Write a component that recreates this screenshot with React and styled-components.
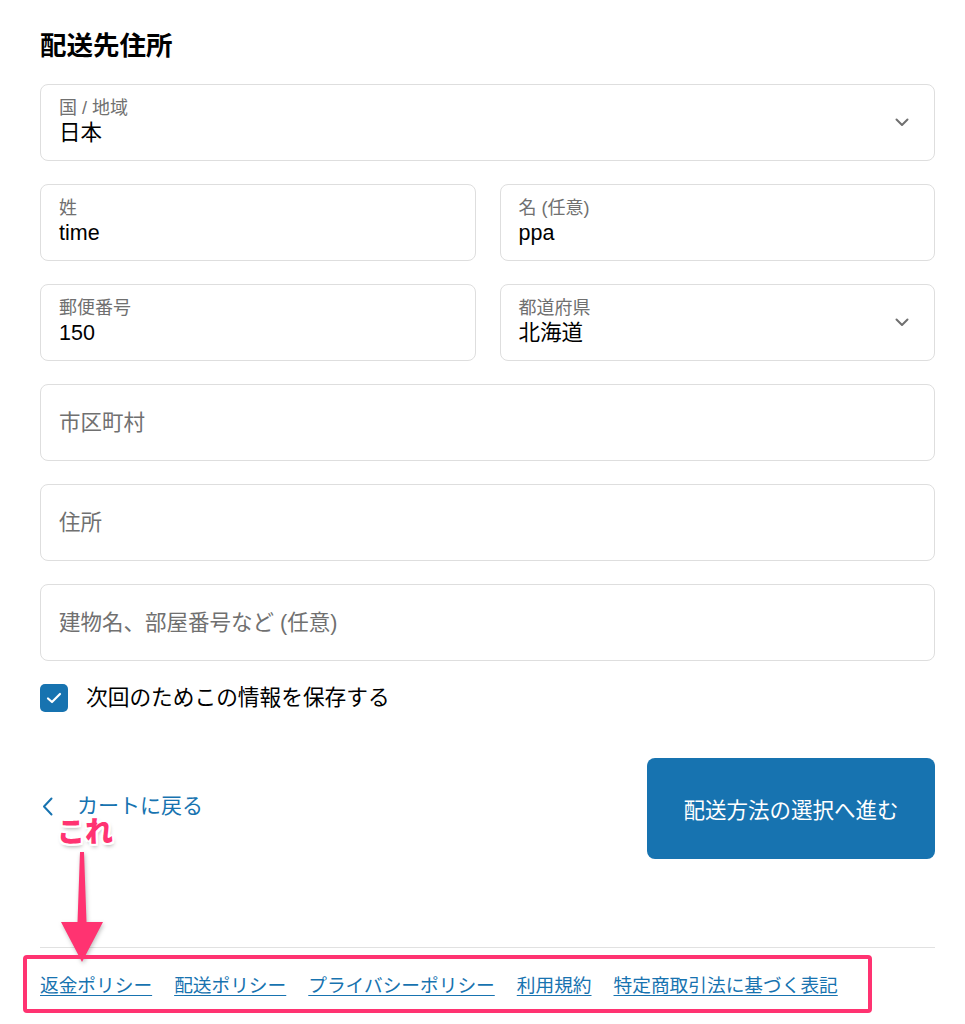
import React from 'react'
import styled, { createGlobalStyle } from 'styled-components'

const GlobalStyle = createGlobalStyle`
body {
    margin: 0;
    background: #fff;
    font-family: "Liberation Sans", "Noto Sans CJK JP", sans-serif;
    color: #000;
}
`

const Page = styled.div`
position: relative;
width: 935px;
min-height: 1024px;
padding: 30px 0 0 40px;
box-sizing: border-box;
overflow: hidden;
`

const Heading = styled.h2`
margin: 0;
font-size: 26.5px;
line-height: 32px;
font-weight: 700;
`

// FORM
const Form = styled.div`
margin-top: 22px;
display: grid;
grid-template-columns: 1fr 1fr;
column-gap: 24px;
row-gap: 23px;
`

const Field = styled.div`
position: relative;
grid-column: ${({ full }) => (full ? '1 / -1' : 'auto')};
height: 77px;
box-sizing: border-box;
border: 1px solid #dedede;
border-radius: 8px;
padding: 0 18px 3px 18px;
display: flex;
flex-direction: column;
justify-content: center;
`

const Label = styled.span`
font-size: 18px;
line-height: 24px;
color: #707070;
`

const Value = styled.span`
font-size: 21.5px;
line-height: 26px;
color: #000;
`

const Placeholder = styled.span`
font-size: 21.5px;
line-height: 26px;
color: #707070;
padding-top: 3px;
`

const Chevron = styled.svg`
position: absolute;
right: 25px;
top: 50%;
margin-top: -5px;
`

// CHECKBOX
const CheckRow = styled.label`
margin-top: 23px;
display: flex;
align-items: center;
gap: 18px;
font-size: 21.7px;
line-height: 28px;
`

const Box = styled.span`
width: 28px;
height: 28px;
border-radius: 5px;
background: #1773b0;
display: flex;
align-items: center;
justify-content: center;
`

// ACTIONS
const Actions = styled.div`
margin-top: 46px;
display: flex;
justify-content: space-between;
align-items: center;
`

const BackLink = styled.a`
display: flex;
align-items: center;
gap: 24px;
padding: 0 0 5px 2px;
font-size: 21px;
line-height: 28px;
color: #1773b0;
text-decoration: none;
`

const Button = styled.button`
width: 288px;
height: 101px;
border: none;
border-radius: 8px;
background: #1773b0;
color: #fff;
font-family: inherit;
font-size: 21.5px;
`

// FOOTER
const Footer = styled.div`
margin-top: 88px;
border-top: 1px solid #e1e1e1;
padding-top: 26px;
display: flex;
gap: 22px;
`

const FootLink = styled.a`
font-size: 18.7px;
line-height: 24px;
color: #1773b0;
text-decoration: underline;
text-underline-offset: 3px;
`

// ANNOTATION
const Frame = styled.div`
position: absolute;
left: 23px;
top: 955px;
width: 849px;
height: 58px;
box-sizing: border-box;
border: 4px solid #ff3371;
border-radius: 4px;
`

const Note = styled.span`
position: absolute;
left: 57px;
top: 812px;
font-size: 28px;
line-height: 36px;
font-weight: 900;
font-family: "Noto Sans CJK JP", sans-serif;
color: #ff3371;
text-shadow: 2px 0 0 #fff, -2px 0 0 #fff, 0 2px 0 #fff, 0 -2px 0 #fff,
    2px 2px 0 #fff, -2px -2px 0 #fff, 2px -2px 0 #fff, -2px 2px 0 #fff,
    1px 3px 4px rgba(0, 0, 0, 0.35);
`

const Arrow = styled.svg`
position: absolute;
left: 58px;
top: 850px;
filter: drop-shadow(1px 2px 2px rgba(0, 0, 0, 0.25));
`

const ChevronDown = () => (
    <Chevron width="14" height="9" viewBox="0 0 14 9">
        <path d="M1.5 1.5 L7 7 L12.5 1.5" fill="none" stroke="#707070" strokeWidth="2" strokeLinecap="round" strokeLinejoin="round" />
    </Chevron>
)

const links = ['返金ポリシー', '配送ポリシー', 'プライバシーポリシー', '利用規約', '特定商取引法に基づく表記']

const App = () => {
    return (
        <Page>
            <GlobalStyle />
            <Heading>配送先住所</Heading>
            <Form>
                <Field full>
                    <Label>国 / 地域</Label>
                    <Value>日本</Value>
                    <ChevronDown />
                </Field>
                <Field>
                    <Label>姓</Label>
                    <Value>time</Value>
                </Field>
                <Field>
                    <Label>名 (任意)</Label>
                    <Value>ppa</Value>
                </Field>
                <Field>
                    <Label>郵便番号</Label>
                    <Value>150</Value>
                </Field>
                <Field>
                    <Label>都道府県</Label>
                    <Value>北海道</Value>
                    <ChevronDown />
                </Field>
                <Field full>
                    <Placeholder>市区町村</Placeholder>
                </Field>
                <Field full>
                    <Placeholder>住所</Placeholder>
                </Field>
                <Field full>
                    <Placeholder>建物名、部屋番号など (任意)</Placeholder>
                </Field>
            </Form>
            <CheckRow>
                <Box>
                    <svg width="16" height="12" viewBox="0 0 16 12">
                        <path d="M2 6.5 L6 10 L14 2" fill="none" stroke="#fff" strokeWidth="2.2" strokeLinecap="round" strokeLinejoin="round" />
                    </svg>
                </Box>
                次回のためこの情報を保存する
            </CheckRow>
            <Actions>
                <BackLink href="#">
                    <svg width="11" height="19" viewBox="0 0 11 19">
                        <path d="M9.5 1.5 L2 9.5 L9.5 17.5" fill="none" stroke="#1773b0" strokeWidth="2" strokeLinecap="round" strokeLinejoin="round" />
                    </svg>
                    カートに戻る
                </BackLink>
                <Button>配送方法の選択へ進む</Button>
            </Actions>
            <Footer>
                {links.map((l) => (
                    <FootLink href="#" key={l}>{l}</FootLink>
                ))}
            </Footer>
            <Note>これ</Note>
            <Arrow width="48" height="114" viewBox="0 0 48 114">
                <polygon points="22,2 26,2 28.5,72 45,72 24,112 3,72 19.5,72" fill="#ff3371" />
            </Arrow>
            <Frame />
        </Page>
    )
}

export default App
